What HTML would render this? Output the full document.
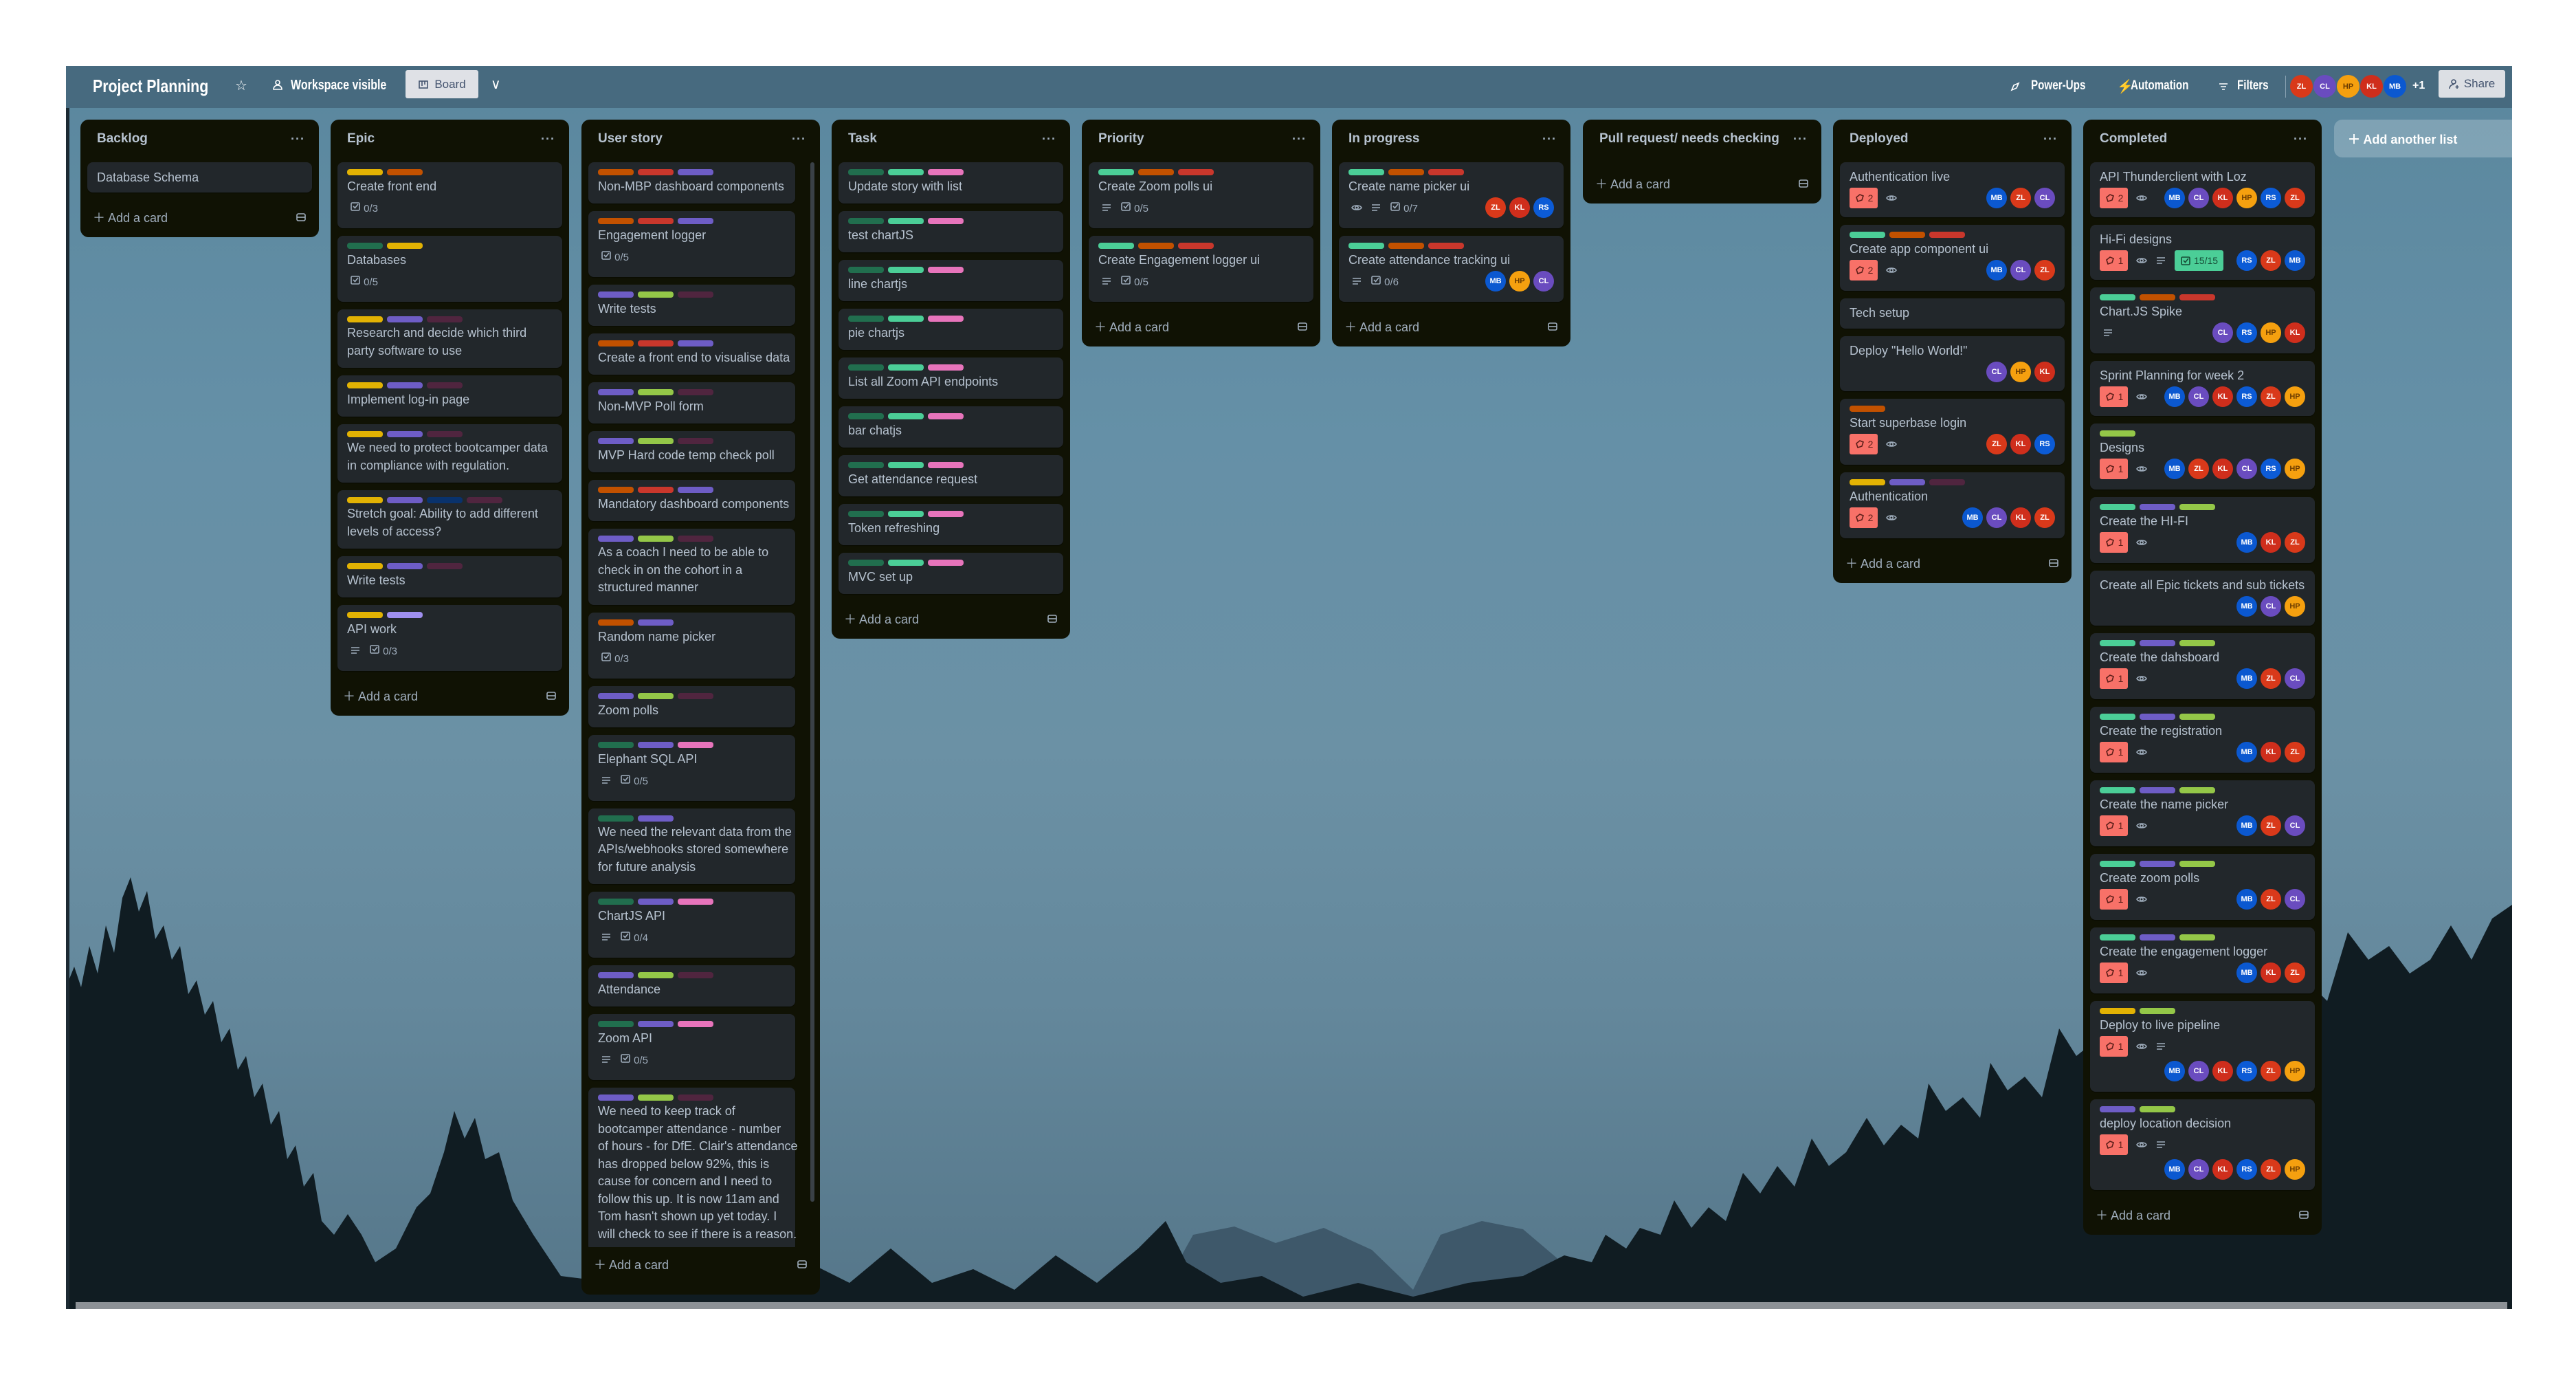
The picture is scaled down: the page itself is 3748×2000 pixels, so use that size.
<!DOCTYPE html>
<html><head><meta charset="utf-8"><style>
*{box-sizing:border-box;margin:0;padding:0}
body{width:3748px;height:2000px;background:#fff;font-family:"Liberation Sans",Arial,sans-serif;position:relative;overflow:hidden}
#bd{position:absolute;left:96px;top:96px;width:3559px;height:1808px;overflow:hidden;background:linear-gradient(180deg,#5a879e 0%,#6590a7 30%,#6b91a5 55%,#64889c 75%,#557689 100%)}
#strip{position:absolute;left:0;top:0;width:5px;height:100%;background:#1c2a33}
#hd{position:absolute;left:0;top:0;width:100%;height:61px;background:#476a7f}
.hx{position:absolute;color:#fff;font-weight:bold;white-space:nowrap;transform-origin:left center}
.list{position:absolute;top:78px;width:347px;background:#101204;border-radius:12px}
.h{height:56px;display:flex;align-items:center;justify-content:space-between;padding:0 20px 0 24px;font-weight:bold;font-size:19px;color:#b6c2cf}
.dots{font-size:18px;letter-spacing:1px;color:#9fadbc}
.cs{padding:6px 10px 0}
.c{background:#22272b;border-radius:8px;padding:10px 14px 12px;margin-bottom:11px;box-shadow:0 1px 1px rgba(0,0,0,.4)}
.c.nl{padding:8px 14px 10px}
.L{height:9px;display:flex;gap:6px;margin-bottom:3px}
.L i{display:block;width:52px;height:9px;border-radius:4px}
.y{background:#e2b203}.o{background:#c25100}.r{background:#c9372c}.p{background:#6e5dc6}.m{background:#50253f}.g{background:#216e4e}.tl{background:#4bce97}.pk{background:#e774bb}.lm{background:#94c748}.nv{background:#09326c}.lp{background:#9f8fef}
.t{font-size:18px;line-height:26px;white-space:nowrap;color:#b6c2cf}
.t.ml{line-height:25.5px}
.b{height:36px;display:flex;align-items:center;gap:12px;color:#9fadbc;font-size:15px;padding-left:4px}
.av{margin-left:auto;display:flex;gap:5px}
.ar{height:36px;display:flex;justify-content:flex-end;align-items:center;gap:5px}
.av b,.ar b,.ha b{width:30px;height:30px;border-radius:50%;display:flex;align-items:center;justify-content:center;font-size:11px;color:#fff;font-weight:bold}
.MB{background:#0b58d0}.ZL{background:#d9391a}.KL{background:#cf2e1c}.CL{background:#6a4cbf}.HP{background:#f5a00f;color:#6b3b00!important}.RS{background:#0c5bd6}
.v{background:#f87168;color:#5d1f1a;width:41px;height:30px;border-radius:3px;display:flex;align-items:center;justify-content:center;gap:4px;font-size:14px;margin-left:-4px}
.gk{background:#4bce97;color:#164b35;height:30px;padding:0 8px;border-radius:3px;display:flex;align-items:center;gap:4px;font-size:14px}
.ad{height:50px;display:flex;align-items:center;justify-content:space-between;padding:0 18px 0 18px;color:#9fadbc;font-size:18px;margin-bottom:4px}
.ad span{display:flex;align-items:center;gap:12px}
svg.i{width:16px;height:16px;fill:none;stroke:#9fadbc;stroke-width:1.6}
</style></head><body>
<svg width="0" height="0" style="position:absolute">
<symbol id="ck" viewBox="0 0 16 16"><rect x="2" y="3" width="12" height="11" rx="1.5"/><path d="M5 8l2.5 2.5L12 5"/></symbol>
<symbol id="ds" viewBox="0 0 16 16"><path d="M2 4h12M2 8h12M2 12h8"/></symbol>
<symbol id="ey" viewBox="0 0 16 16"><path d="M1 8c2-4 12-4 14 0c-2 4-12 4-14 0z"/><circle cx="8" cy="8" r="2.2"/></symbol>
<symbol id="vt" viewBox="0 0 16 16"><path d="M3 7l5-4 5 2-2 6-6 2z"/></symbol>
<symbol id="tp" viewBox="0 0 16 16"><rect x="2" y="3" width="12" height="10" rx="2"/><path d="M2 8h12"/></symbol>
</svg>
<div id="bd">
<svg style="position:absolute;left:0;top:0" width="3559" height="1808" viewBox="0 0 3559 1808">
<polygon fill="#3e586a" points="1580,1808 1640,1700 1700,1688 1760,1712 1830,1690 1900,1722 1960,1780 2000,1700 2060,1680 2120,1692 2200,1760 2300,1808"/>
<polygon fill="#101c22" points="0,1808 0,1340 12,1310 22,1340 34,1280 46,1320 58,1250 70,1290 82,1210 94,1180 106,1230 118,1200 130,1270 142,1250 154,1300 166,1280 178,1350 190,1330 202,1380 214,1360 226,1420 238,1400 250,1460 262,1440 274,1500 286,1480 298,1540 310,1520 322,1590 334,1570 346,1630 360,1610 372,1680 390,1700 410,1670 430,1700 450,1740 480,1720 510,1660 530,1640 550,1580 565,1520 580,1560 595,1530 610,1590 630,1580 650,1650 680,1700 720,1760 800,1770 860,1740 900,1770 960,1700 1000,1760 1080,1740 1140,1770 1200,1720 1260,1770 1320,1750 1380,1780 1440,1730 1500,1770 1560,1720 1600,1680 1630,1740 1680,1770 1740,1760 1800,1790 1880,1770 1960,1790 2040,1770 2120,1760 2180,1730 2220,1740 2240,1700 2270,1720 2290,1690 2320,1700 2340,1650 2365,1690 2390,1660 2415,1680 2440,1610 2465,1640 2490,1600 2515,1630 2540,1560 2565,1600 2590,1580 2620,1530 2645,1570 2670,1540 2695,1560 2710,1480 2735,1520 2760,1500 2785,1530 2800,1450 2825,1490 2850,1470 2875,1500 2900,1400 2925,1440 2950,1420 2975,1460 3000,1380 3025,1420 3050,1400 3075,1430 3100,1350 3125,1390 3150,1370 3175,1400 3200,1310 3230,1350 3260,1330 3290,1360 3320,1260 3350,1300 3380,1280 3410,1320 3440,1300 3470,1250 3500,1300 3530,1240 3559,1220 3559,1808"/>
<rect x="14" y="1798" width="3538" height="10" fill="#8c9196"/>
</svg>
<div id="strip"></div>
<div id="hd">
<div class="hx" style="left:39px;top:14px;font-size:26px;transform:scaleX(.82)">Project Planning</div>
<div class="hx" style="left:246px;top:16px;font-size:20px;font-weight:normal">☆</div>
<svg class="i" style="position:absolute;left:300px;top:19px;stroke:#fff" viewBox="0 0 16 16"><circle cx="8" cy="5" r="3"/><path d="M2 15c0-4 3-6 6-6s6 2 6 6z"/></svg>
<div class="hx" style="left:327px;top:17px;font-size:20px;transform:scaleX(.8)">Workspace visible</div>
<div style="position:absolute;left:494px;top:6px;width:106px;height:41px;background:#dfe1e6;border-radius:3px;color:#44546f;font-size:17px;display:flex;align-items:center;justify-content:center;gap:8px"><svg class="i" style="stroke:#44546f" viewBox="0 0 16 16"><rect x="2" y="3" width="12" height="10"/><path d="M6 3v7M10 3v5"/></svg>Board</div>
<div class="hx" style="left:618px;top:14px;font-size:20px;font-weight:normal">∨</div>
<svg class="i" style="position:absolute;left:2828px;top:22px;stroke:#fff" viewBox="0 0 16 16"><path d="M3 13l3-7 7-3-3 7z"/></svg>
<div class="hx" style="left:2859px;top:18px;font-size:19px;transform:scaleX(.8)">Power-Ups</div>
<div class="hx" style="left:2984px;top:18px;font-size:19px">⚡</div>
<div class="hx" style="left:3004px;top:18px;font-size:19px;transform:scaleX(.8)">Automation</div>
<svg class="i" style="position:absolute;left:3131px;top:22px;stroke:#fff" viewBox="0 0 16 16"><path d="M2 4h12M4 8h8M6 12h4"/></svg>
<div class="hx" style="left:3159px;top:18px;font-size:19px;transform:scaleX(.8)">Filters</div>
<div style="position:absolute;left:3229px;top:14px;width:1px;height:32px;background:#8aa3b3"></div>
<div class="ha" style="position:absolute;left:3236px;top:13px;display:flex;gap:1px"><b class="ZL" style="width:33px;height:33px">ZL</b><b class="CL" style="width:33px;height:33px">CL</b><b class="HP" style="width:33px;height:33px">HP</b><b class="KL" style="width:33px;height:33px">KL</b><b class="MB" style="width:33px;height:33px">MB</b></div>
<div class="hx" style="left:3414px;top:20px;font-size:16px">+1</div>
<div style="position:absolute;left:3452px;top:6px;width:97px;height:40px;background:#dcdfe4;border-radius:3px;color:#44546f;font-size:17px;display:flex;align-items:center;justify-content:center;gap:6px"><svg class="i" style="stroke:#44546f" viewBox="0 0 16 16"><circle cx="7" cy="5" r="3"/><path d="M1 15c0-4 3-6 6-6M12 10v5M9.5 12.5h5"/></svg>Share</div>
</div>

<div class="list" style="left:21px"><div class="h">Backlog<span class="dots">···</span></div><div class="cs">
<div class="c nl" style="padding:9px 14px"><div class="t">Database Schema</div></div>
</div><div class="ad"><span>＋ Add a card</span><svg class="i"><use href="#tp"/></svg></div></div>

<div class="list" style="left:385px"><div class="h">Epic<span class="dots">···</span></div><div class="cs">
<div class="c"><div class="L"><i class="y"></i><i class="o"></i></div><div class="t">Create front end</div><div class="b"><span><svg class="i"><use href="#ck"/></svg> 0/3</span></div></div>
<div class="c"><div class="L"><i class="g"></i><i class="y"></i></div><div class="t">Databases</div><div class="b"><span><svg class="i"><use href="#ck"/></svg> 0/5</span></div></div>
<div class="c"><div class="L"><i class="y"></i><i class="p"></i><i class="m"></i></div><div class="t ml">Research and decide which third<br>party software to use</div></div>
<div class="c"><div class="L"><i class="y"></i><i class="p"></i><i class="m"></i></div><div class="t">Implement log-in page</div></div>
<div class="c"><div class="L"><i class="y"></i><i class="p"></i><i class="m"></i></div><div class="t ml">We need to protect bootcamper data<br>in compliance with regulation.</div></div>
<div class="c"><div class="L"><i class="y"></i><i class="p"></i><i class="nv"></i><i class="m"></i></div><div class="t ml">Stretch goal: Ability to add different<br>levels of access?</div></div>
<div class="c"><div class="L"><i class="y"></i><i class="p"></i><i class="m"></i></div><div class="t">Write tests</div></div>
<div class="c"><div class="L"><i class="y"></i><i class="lp"></i></div><div class="t">API work</div><div class="b"><svg class="i"><use href="#ds"/></svg><span><svg class="i"><use href="#ck"/></svg> 0/3</span></div></div>
</div><div class="ad"><span>＋ Add a card</span><svg class="i"><use href="#tp"/></svg></div></div>

<div class="list" style="left:750px;height:1709px"><div class="h">User story<span class="dots">···</span></div>
<div style="position:absolute;left:333px;top:62px;width:6px;height:1512px;background:#3a4147;border-radius:3px"></div>
<div class="cs" style="height:1584px;overflow:hidden;padding-right:36px">
<div class="c"><div class="L"><i class="o"></i><i class="r"></i><i class="p"></i></div><div class="t">Non-MBP dashboard components</div></div>
<div class="c"><div class="L"><i class="o"></i><i class="r"></i><i class="p"></i></div><div class="t">Engagement logger</div><div class="b"><span><svg class="i"><use href="#ck"/></svg> 0/5</span></div></div>
<div class="c"><div class="L"><i class="p"></i><i class="lm"></i><i class="m"></i></div><div class="t">Write tests</div></div>
<div class="c"><div class="L"><i class="o"></i><i class="r"></i><i class="p"></i></div><div class="t">Create a front end to visualise data</div></div>
<div class="c"><div class="L"><i class="p"></i><i class="lm"></i><i class="m"></i></div><div class="t">Non-MVP Poll form</div></div>
<div class="c"><div class="L"><i class="p"></i><i class="lm"></i><i class="m"></i></div><div class="t">MVP Hard code temp check poll</div></div>
<div class="c"><div class="L"><i class="o"></i><i class="r"></i><i class="p"></i></div><div class="t">Mandatory dashboard components</div></div>
<div class="c"><div class="L"><i class="p"></i><i class="lm"></i><i class="m"></i></div><div class="t ml">As a coach I need to be able to<br>check in on the cohort in a<br>structured manner</div></div>
<div class="c"><div class="L"><i class="o"></i><i class="p"></i></div><div class="t">Random name picker</div><div class="b"><span><svg class="i"><use href="#ck"/></svg> 0/3</span></div></div>
<div class="c"><div class="L"><i class="p"></i><i class="lm"></i><i class="m"></i></div><div class="t">Zoom polls</div></div>
<div class="c"><div class="L"><i class="g"></i><i class="p"></i><i class="pk"></i></div><div class="t">Elephant SQL API</div><div class="b"><svg class="i"><use href="#ds"/></svg><span><svg class="i"><use href="#ck"/></svg> 0/5</span></div></div>
<div class="c"><div class="L"><i class="g"></i><i class="p"></i></div><div class="t ml">We need the relevant data from the<br>APIs/webhooks stored somewhere<br>for future analysis</div></div>
<div class="c"><div class="L"><i class="g"></i><i class="p"></i><i class="pk"></i></div><div class="t">ChartJS API</div><div class="b"><svg class="i"><use href="#ds"/></svg><span><svg class="i"><use href="#ck"/></svg> 0/4</span></div></div>
<div class="c"><div class="L"><i class="p"></i><i class="lm"></i><i class="m"></i></div><div class="t">Attendance</div></div>
<div class="c"><div class="L"><i class="g"></i><i class="p"></i><i class="pk"></i></div><div class="t">Zoom API</div><div class="b"><svg class="i"><use href="#ds"/></svg><span><svg class="i"><use href="#ck"/></svg> 0/5</span></div></div>
<div class="c"><div class="L"><i class="p"></i><i class="lm"></i><i class="m"></i></div><div class="t ml">We need to keep track of<br>bootcamper attendance - number<br>of hours - for DfE. Clair's attendance<br>has dropped below 92%, this is<br>cause for concern and I need to<br>follow this up. It is now 11am and<br>Tom hasn't shown up yet today. I<br>will check to see if there is a reason.</div></div>
</div><div class="ad"><span>＋ Add a card</span><svg class="i"><use href="#tp"/></svg></div></div>

<div class="list" style="left:1114px"><div class="h">Task<span class="dots">···</span></div><div class="cs">
<div class="c"><div class="L"><i class="g"></i><i class="tl"></i><i class="pk"></i></div><div class="t">Update story with list</div></div>
<div class="c"><div class="L"><i class="g"></i><i class="tl"></i><i class="pk"></i></div><div class="t">test chartJS</div></div>
<div class="c"><div class="L"><i class="g"></i><i class="tl"></i><i class="pk"></i></div><div class="t">line chartjs</div></div>
<div class="c"><div class="L"><i class="g"></i><i class="tl"></i><i class="pk"></i></div><div class="t">pie chartjs</div></div>
<div class="c"><div class="L"><i class="g"></i><i class="tl"></i><i class="pk"></i></div><div class="t">List all Zoom API endpoints</div></div>
<div class="c"><div class="L"><i class="g"></i><i class="tl"></i><i class="pk"></i></div><div class="t">bar chatjs</div></div>
<div class="c"><div class="L"><i class="g"></i><i class="tl"></i><i class="pk"></i></div><div class="t">Get attendance request</div></div>
<div class="c"><div class="L"><i class="g"></i><i class="tl"></i><i class="pk"></i></div><div class="t">Token refreshing</div></div>
<div class="c"><div class="L"><i class="g"></i><i class="tl"></i><i class="pk"></i></div><div class="t">MVC set up</div></div>
</div><div class="ad"><span>＋ Add a card</span><svg class="i"><use href="#tp"/></svg></div></div>

<div class="list" style="left:1478px"><div class="h">Priority<span class="dots">···</span></div><div class="cs">
<div class="c"><div class="L"><i class="tl"></i><i class="o"></i><i class="r"></i></div><div class="t">Create Zoom polls ui</div><div class="b"><svg class="i"><use href="#ds"/></svg><span><svg class="i"><use href="#ck"/></svg> 0/5</span></div></div>
<div class="c"><div class="L"><i class="tl"></i><i class="o"></i><i class="r"></i></div><div class="t">Create Engagement logger ui</div><div class="b"><svg class="i"><use href="#ds"/></svg><span><svg class="i"><use href="#ck"/></svg> 0/5</span></div></div>
</div><div class="ad"><span>＋ Add a card</span><svg class="i"><use href="#tp"/></svg></div></div>

<div class="list" style="left:1842px"><div class="h">In progress<span class="dots">···</span></div><div class="cs">
<div class="c"><div class="L"><i class="tl"></i><i class="o"></i><i class="r"></i></div><div class="t">Create name picker ui</div><div class="b"><svg class="i"><use href="#ey"/></svg><svg class="i"><use href="#ds"/></svg><span><svg class="i"><use href="#ck"/></svg> 0/7</span><div class="av"><b class="ZL">ZL</b><b class="KL">KL</b><b class="RS">RS</b></div></div></div>
<div class="c"><div class="L"><i class="tl"></i><i class="o"></i><i class="r"></i></div><div class="t">Create attendance tracking ui</div><div class="b"><svg class="i"><use href="#ds"/></svg><span><svg class="i"><use href="#ck"/></svg> 0/6</span><div class="av"><b class="MB">MB</b><b class="HP">HP</b><b class="CL">CL</b></div></div></div>
</div><div class="ad"><span>＋ Add a card</span><svg class="i"><use href="#tp"/></svg></div></div>

<div class="list" style="left:2207px"><div class="h">Pull request/ needs checking<span class="dots">···</span></div><div class="cs"></div>
<div class="ad" style="margin-top:6px"><span>＋ Add a card</span><svg class="i"><use href="#tp"/></svg></div></div>

<div class="list" style="left:2571px"><div class="h">Deployed<span class="dots">···</span></div><div class="cs">
<div class="c nl"><div class="t">Authentication live</div><div class="b"><span class="v"><svg class="i" style="stroke:#5d1f1a"><use href="#vt"/></svg>2</span><svg class="i"><use href="#ey"/></svg><div class="av"><b class="MB">MB</b><b class="ZL">ZL</b><b class="CL">CL</b></div></div></div>
<div class="c"><div class="L"><i class="tl"></i><i class="o"></i><i class="r"></i></div><div class="t">Create app component ui</div><div class="b"><span class="v"><svg class="i" style="stroke:#5d1f1a"><use href="#vt"/></svg>2</span><svg class="i"><use href="#ey"/></svg><div class="av"><b class="MB">MB</b><b class="CL">CL</b><b class="ZL">ZL</b></div></div></div>
<div class="c nl"><div class="t">Tech setup</div></div>
<div class="c nl"><div class="t">Deploy "Hello World!"</div><div class="ar"><b class="CL">CL</b><b class="HP">HP</b><b class="KL">KL</b></div></div>
<div class="c"><div class="L"><i class="o"></i></div><div class="t">Start superbase login</div><div class="b"><span class="v"><svg class="i" style="stroke:#5d1f1a"><use href="#vt"/></svg>2</span><svg class="i"><use href="#ey"/></svg><div class="av"><b class="ZL">ZL</b><b class="KL">KL</b><b class="RS">RS</b></div></div></div>
<div class="c"><div class="L"><i class="y"></i><i class="p"></i><i class="m"></i></div><div class="t">Authentication</div><div class="b"><span class="v"><svg class="i" style="stroke:#5d1f1a"><use href="#vt"/></svg>2</span><svg class="i"><use href="#ey"/></svg><div class="av"><b class="MB">MB</b><b class="CL">CL</b><b class="KL">KL</b><b class="ZL">ZL</b></div></div></div>
</div><div class="ad"><span>＋ Add a card</span><svg class="i"><use href="#tp"/></svg></div></div>

<div class="list" style="left:2935px"><div class="h">Completed<span class="dots">···</span></div><div class="cs">
<div class="c nl"><div class="t">API Thunderclient with Loz</div><div class="b"><span class="v"><svg class="i" style="stroke:#5d1f1a"><use href="#vt"/></svg>2</span><svg class="i"><use href="#ey"/></svg><div class="av"><b class="MB">MB</b><b class="CL">CL</b><b class="KL">KL</b><b class="HP">HP</b><b class="RS">RS</b><b class="ZL">ZL</b></div></div></div>
<div class="c nl"><div class="t">Hi-Fi designs</div><div class="b"><span class="v"><svg class="i" style="stroke:#5d1f1a"><use href="#vt"/></svg>1</span><svg class="i"><use href="#ey"/></svg><svg class="i"><use href="#ds"/></svg><span class="gk"><svg class="i" style="stroke:#164b35"><use href="#ck"/></svg>15/15</span><div class="av"><b class="RS">RS</b><b class="ZL">ZL</b><b class="MB">MB</b></div></div></div>
<div class="c"><div class="L"><i class="tl"></i><i class="o"></i><i class="r"></i></div><div class="t">Chart.JS Spike</div><div class="b"><svg class="i"><use href="#ds"/></svg><div class="av"><b class="CL">CL</b><b class="RS">RS</b><b class="HP">HP</b><b class="KL">KL</b></div></div></div>
<div class="c nl"><div class="t">Sprint Planning for week 2</div><div class="b"><span class="v"><svg class="i" style="stroke:#5d1f1a"><use href="#vt"/></svg>1</span><svg class="i"><use href="#ey"/></svg><div class="av"><b class="MB">MB</b><b class="CL">CL</b><b class="KL">KL</b><b class="RS">RS</b><b class="ZL">ZL</b><b class="HP">HP</b></div></div></div>
<div class="c"><div class="L"><i class="lm"></i></div><div class="t">Designs</div><div class="b"><span class="v"><svg class="i" style="stroke:#5d1f1a"><use href="#vt"/></svg>1</span><svg class="i"><use href="#ey"/></svg><div class="av"><b class="MB">MB</b><b class="ZL">ZL</b><b class="KL">KL</b><b class="CL">CL</b><b class="RS">RS</b><b class="HP">HP</b></div></div></div>
<div class="c"><div class="L"><i class="tl"></i><i class="p"></i><i class="lm"></i></div><div class="t">Create the HI-FI</div><div class="b"><span class="v"><svg class="i" style="stroke:#5d1f1a"><use href="#vt"/></svg>1</span><svg class="i"><use href="#ey"/></svg><div class="av"><b class="MB">MB</b><b class="KL">KL</b><b class="ZL">ZL</b></div></div></div>
<div class="c nl"><div class="t">Create all Epic tickets and sub tickets</div><div class="ar"><b class="MB">MB</b><b class="CL">CL</b><b class="HP">HP</b></div></div>
<div class="c"><div class="L"><i class="tl"></i><i class="p"></i><i class="lm"></i></div><div class="t">Create the dahsboard</div><div class="b"><span class="v"><svg class="i" style="stroke:#5d1f1a"><use href="#vt"/></svg>1</span><svg class="i"><use href="#ey"/></svg><div class="av"><b class="MB">MB</b><b class="ZL">ZL</b><b class="CL">CL</b></div></div></div>
<div class="c"><div class="L"><i class="tl"></i><i class="p"></i><i class="lm"></i></div><div class="t">Create the registration</div><div class="b"><span class="v"><svg class="i" style="stroke:#5d1f1a"><use href="#vt"/></svg>1</span><svg class="i"><use href="#ey"/></svg><div class="av"><b class="MB">MB</b><b class="KL">KL</b><b class="ZL">ZL</b></div></div></div>
<div class="c"><div class="L"><i class="tl"></i><i class="p"></i><i class="lm"></i></div><div class="t">Create the name picker</div><div class="b"><span class="v"><svg class="i" style="stroke:#5d1f1a"><use href="#vt"/></svg>1</span><svg class="i"><use href="#ey"/></svg><div class="av"><b class="MB">MB</b><b class="ZL">ZL</b><b class="CL">CL</b></div></div></div>
<div class="c"><div class="L"><i class="tl"></i><i class="p"></i><i class="lm"></i></div><div class="t">Create zoom polls</div><div class="b"><span class="v"><svg class="i" style="stroke:#5d1f1a"><use href="#vt"/></svg>1</span><svg class="i"><use href="#ey"/></svg><div class="av"><b class="MB">MB</b><b class="ZL">ZL</b><b class="CL">CL</b></div></div></div>
<div class="c"><div class="L"><i class="tl"></i><i class="p"></i><i class="lm"></i></div><div class="t">Create the engagement logger</div><div class="b"><span class="v"><svg class="i" style="stroke:#5d1f1a"><use href="#vt"/></svg>1</span><svg class="i"><use href="#ey"/></svg><div class="av"><b class="MB">MB</b><b class="KL">KL</b><b class="ZL">ZL</b></div></div></div>
<div class="c"><div class="L"><i class="y"></i><i class="lm"></i></div><div class="t">Deploy to live pipeline</div><div class="b"><span class="v"><svg class="i" style="stroke:#5d1f1a"><use href="#vt"/></svg>1</span><svg class="i"><use href="#ey"/></svg><svg class="i"><use href="#ds"/></svg></div><div class="ar"><b class="MB">MB</b><b class="CL">CL</b><b class="KL">KL</b><b class="RS">RS</b><b class="ZL">ZL</b><b class="HP">HP</b></div></div>
<div class="c"><div class="L"><i class="p"></i><i class="lm"></i></div><div class="t">deploy location decision</div><div class="b"><span class="v"><svg class="i" style="stroke:#5d1f1a"><use href="#vt"/></svg>1</span><svg class="i"><use href="#ey"/></svg><svg class="i"><use href="#ds"/></svg></div><div class="ar"><b class="MB">MB</b><b class="CL">CL</b><b class="KL">KL</b><b class="RS">RS</b><b class="ZL">ZL</b><b class="HP">HP</b></div></div>
</div><div class="ad"><span>＋ Add a card</span><svg class="i"><use href="#tp"/></svg></div></div>

<div style="position:absolute;left:3300px;top:78px;width:270px;height:55px;background:rgba(255,255,255,.22);border-radius:12px;color:#fff;font-weight:bold;font-size:18px;display:flex;align-items:center;padding-left:20px;gap:10px">＋ Add another list</div>
</div>
</body></html>
